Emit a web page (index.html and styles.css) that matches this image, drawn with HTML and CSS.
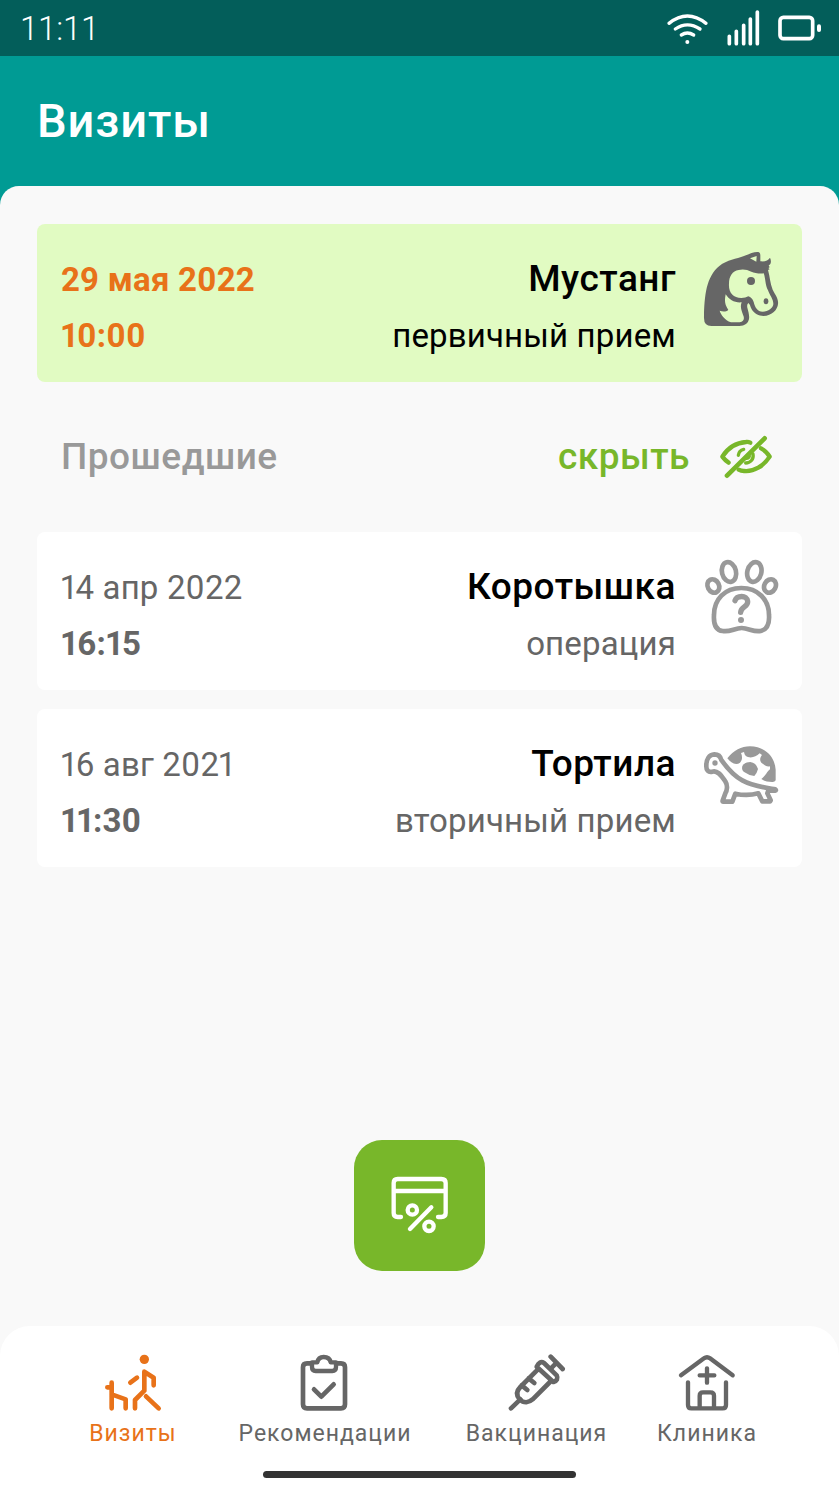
FILE: index.html
```html
<!DOCTYPE html>
<html lang="ru">
<head>
    <meta charset="UTF-8">
    <meta name="viewport" content="width=device-width, initial-scale=1.0">
    <title>Визиты</title>
    <link rel="stylesheet" href="styles.css">
</head>
<body>

    <div class="status-bar">
        <span class="clock">11:11</span>
        <svg class="status-icons" viewBox="0 0 597 168">
            <g fill="none" stroke="#fff" stroke-linecap="round" stroke-width="10">
                <path d="M87 70Q142 26 198 70M106 87Q142 62 180 87M124 105Q142 93 161 105"/>
                <path d="M268 109V131M289 94V131M311 76V131M331 57V131M352 36V131" stroke-width="11"/>
                <rect x="420" y="52" width="98" height="64" rx="10" stroke-width="11"/>
                <path d="M537 79V90" stroke-width="12"/>
            </g>
            <circle cx="142" cy="126" r="6" fill="#fff"/>
        </svg>
    </div>

    <header>
        <h1>Визиты</h1>
    </header>

    <main>
        <section class="visit upcoming">
            <div class="when">
                <div class="date">29 мая 2022</div>
                <div class="time">10:00</div>
            </div>
            <div class="pet">
                <div class="name">Мустанг</div>
                <div class="reason">первичный прием</div>
            </div>
            <svg class="pet-icon" viewBox="36 45 234 234">
                <path fill="#666" d="M64 273Q42 273 42 249C43 180 49 125 88 93C112 74 139 72 162 63C181 55 194 50 204 51Q211 52 211 61V79C225 81 235 76 240 68C245 79 243 88 236 91L239 97L235 99L239 103L234 105C240 125 240 145 248 164C256 180 266 191 264 207C263 223 246 243 220 243C207 243 192 236 185 223C180 214 181 208 175 204Q170 209 172 218C176 233 181 249 174 260C166 275 145 273 120 273Z"/>
                <path fill="#e1fbc2" d="M180 70L200 63L199 80ZM146 105C127 108 117 124 117 146C115 172 129 189 154 189Q167 189 175 184Q186 187 191 201C195 217 202 230 218 230C235 230 251 217 250 206C250 192 239 181 234 166C225 150 227 129 221 115C207 117 193 113 184 110Q166 101 146 105ZM107 178C103 198 104 207 115 225C107 231 98 230 89 227C93 240 104 255 123 262H149C163 260 164 249 159 239C152 221 151 213 155 202C134 204 118 195 107 178Z"/>
                <circle cx="183" cy="138" r="12" fill="#666"/>
                <ellipse cx="228" cy="199" rx="7" ry="9" fill="#666"/>
            </svg>
        </section>

        <div class="past-header">
            <h2>Прошедшие</h2>
            <a class="hide-link">скрыть</a>
            <svg class="eye-icon" viewBox="54 24 168 138">
                <g fill="none" stroke="#78b72a" stroke-width="13" stroke-linecap="round" stroke-linejoin="round">
                    <path d="M86 113Q76 107 67 95C84 68 108 53 138 51Q145 50 151 53"/>
                    <path d="M183 70Q199 78 209 95C191 123 162 141 132 138Q123 138 116 134"/>
                    <path d="M115 91Q117 76 131 73M137 114C151 114 162 103 159 87M138 100Q145 101 148 94" stroke-width="10"/>
                    <path d="M81 152L194 40" stroke-width="14"/>
                </g>
            </svg>
        </div>

        <section class="visit">
            <div class="when">
                <div class="date">14 апр 2022</div>
                <div class="time">16:15</div>
            </div>
            <div class="pet">
                <div class="name">Коротышка</div>
                <div class="reason">операция</div>
            </div>
            <svg class="pet-icon" viewBox="36 39 234 234">
                <g fill="none" stroke="#999" stroke-width="14" stroke-linecap="round" stroke-linejoin="round">
                    <ellipse cx="117" cy="81" rx="21" ry="30" transform="rotate(-14 117 81)"/>
                    <ellipse cx="193" cy="81" rx="21" ry="30" transform="rotate(14 193 81)"/>
                    <ellipse cx="70" cy="123" rx="17" ry="21" transform="rotate(-28 70 123)"/>
                    <ellipse cx="240" cy="123" rx="17" ry="21" transform="rotate(28 240 123)"/>
                    <path d="M154 129C104 129 72 163 72 210C70 241 81 256 98 258C120 262 134 249 155 249S190 262 212 258C230 254 239 239 237 210C237 164 204 129 154 129Z"/>
                    <path d="M135 167C140 151 171 149 173 169C175 187 153 183 152 202" stroke-width="16"/>
                </g>
                <circle cx="153" cy="225" r="9" fill="#999"/>
            </svg>
        </section>

        <section class="visit">
            <div class="when">
                <div class="date">16 авг 2021</div>
                <div class="time">11:30</div>
            </div>
            <div class="pet">
                <div class="name">Тортила</div>
                <div class="reason">вторичный прием</div>
            </div>
            <svg class="pet-icon" viewBox="36 15 234 234">
                <path fill="#999" d="M112 85C131 61 154 49 180 49C225 50 254 79 257 119V151Q254 157 246 156C235 155 224 154 214 147C226 139 232 123 240 118V109C232 112 221 104 215 99C208 91 210 83 216 75L209 70C199 80 185 85 174 81C163 77 164 72 162 66L153 69C158 80 157 91 150 98C139 106 125 101 112 85Z"/>
                <path fill="#999" d="M157 108Q164 96 181 96Q198 98 204 117Q200 132 193 138Q175 135 161 125Q154 119 157 108Z"/>
                <path fill="none" stroke="#999" stroke-width="14" stroke-linecap="round" stroke-linejoin="round" d="M94 90C91 77 83 73 73 73C57 74 49 88 49 106C48 120 55 128 67 125C84 120 95 139 106 154C114 166 111 182 106 190L98 212Q97 215 100 215H127L136 191Q171 199 205 190L217 214H240L242 211L232 190L235 182H255Q260 181 256 178C226 173 190 169 157 151C126 135 107 108 94 90Z"/>
                <circle cx="75" cy="99" r="8" fill="#999"/>
            </svg>
        </section>
    </main>

    <button class="discount">
        <svg class="discount-icon" viewBox="150 138 180 180">
            <g fill="none" stroke="#fff" stroke-width="13" stroke-linecap="round" stroke-linejoin="round">
                <path d="M183 261H173Q161 261 161 249V159Q161 147 173 147H304Q317 147 317 159V249Q317 261 304 261H294M161 183H317"/>
                <path d="M210 297L274 232"/>
                <circle cx="217" cy="240" r="14"/>
                <circle cx="267" cy="289" r="14"/>
            </g>
        </svg>
    </button>

    <nav>
        <div class="tab tab-visits active">
            <svg class="tab-icon" viewBox="69 38 180 180">
                <g fill="none" stroke="currentColor" stroke-width="14" stroke-linecap="round" stroke-linejoin="round">
                    <path d="M82 141H95M95 127V204M95 162L137 177V204"/>
                    <path d="M165 204V179L193 151V94L221 112V135M171 112L151 127M198 168L236 204"/>
                </g>
                <circle cx="193" cy="57" r="14" fill="currentColor"/>
            </svg>
            <span>Визиты</span>
        </div>
        <div class="tab tab-recommendations">
            <svg class="tab-icon" viewBox="45 38 180 180">
                <g fill="none" stroke="currentColor" stroke-width="14" stroke-linecap="round" stroke-linejoin="round">
                    <path d="M96 69H81Q69 69 69 81V192Q69 204 81 204H183Q195 204 195 192V81Q195 69 183 69H168"/>
                    <path d="M96 66H112Q115 50 131 50Q149 50 152 66H168V80Q168 92 157 92H107Q96 92 96 80Z" stroke-width="13"/>
                    <path d="M102 147L124 169L161 132"/>
                </g>
            </svg>
            <span>Рекомендации</span>
        </div>
        <div class="tab tab-vaccination">
            <svg class="tab-icon" viewBox="79 38 180 180">
                <g fill="none" stroke="currentColor" stroke-width="14" stroke-linecap="round" stroke-linejoin="round">
                    <path d="M91 204L119 177M210 49L246 86M228 67L211 84"/>
                    <path d="M168 79Q177 60 190 68L228 105Q235 119 218 125ZM174 85L119 140C106 153 107 166 117 177C130 190 145 187 156 177L211 122M123 135L140 149M144 114L161 128"/>
                </g>
            </svg>
            <span>Вакцинация</span>
        </div>
        <div class="tab tab-clinic">
            <svg class="tab-icon" viewBox="109 38 180 180">
                <g fill="none" stroke="currentColor" stroke-width="13" stroke-linecap="round" stroke-linejoin="round">
                    <path d="M121 105L190 54Q199 47 208 54L276 105"/>
                    <path d="M142 126V194Q142 204 152 204H246Q256 204 256 194V126M177 204V166Q177 156 187 156H209Q220 156 220 166V204M199 84V127M177 105H221"/>
                </g>
            </svg>
            <span>Клиника</span>
        </div>
        <div class="home-line"></div>
    </nav>

</body>
</html>
```

FILE: styles.css
```css
body {
    font-family: Roboto, "Liberation Sans", sans-serif;
    background: linear-gradient(#009b94 400px, #f9f9f9 400px);
    margin: 0;
    padding: 0;
    width: 839px;
    height: 1492px;
    display: flex;
    flex-direction: column;
    overflow: hidden;
}

.status-bar {
    height: 56px;
    flex: none;
    background-color: #035e5a;
    color: #fff;
    display: flex;
    justify-content: space-between;
}

.clock {
    font-size: 33px;
    font-weight: 300;
    line-height: 57px;
    letter-spacing: -0.2px;
    padding-left: 20px;
}

.status-icons {
    width: 199px;
    height: 56px;
}

header {
    height: 130px;
    flex: none;
    color: #fff;
}

h1 {
    font-size: 47px;
    font-weight: 500;
    line-height: 55px;
    letter-spacing: 0.9px;
    margin: 37px 0 0 37px;
}

main {
    height: 954px;
    flex: none;
    box-sizing: border-box;
    padding: 38px 37px 0;
    background-color: #f9f9f9;
    border-radius: 19px 19px 0 0;
}

.visit {
    display: flex;
    height: 158px;
    box-sizing: border-box;
    padding: 26px 22px 0 24px;
    margin-bottom: 19px;
    background-color: #fff;
    border-radius: 8px;
    color: #666;
    font-size: 33px;
    line-height: 56px;
    letter-spacing: 0.16px;
}

.when {
    flex: 1;
    padding-top: 2px;
    font-feature-settings: "pnum";
}

.pet {
    text-align: right;
    margin-right: 26px;
    padding-top: 1px;
}

.time {
    font-weight: 700;
}

.name {
    color: #000;
    font-size: 37px;
    font-weight: 500;
    line-height: 56px;
    letter-spacing: 0.5px;
}

.reason {
    padding-top: 1px;
}

.pet-icon {
    width: 78px;
    height: 78px;
}

.upcoming {
    background-color: #e1fbc2;
}

.upcoming .when {
    color: #e87219;
    font-weight: 700;
}

.upcoming .reason {
    color: #000;
}

.past-header {
    display: flex;
    align-items: center;
    height: 148px;
    margin-top: -19px;
    margin-bottom: 2px;
    padding: 0 28px 0 24px;
    font-size: 37px;
    font-weight: 500;
    letter-spacing: 0.5px;
}

h2 {
    flex: 1;
    margin: 0;
    color: #999;
    font-size: 37px;
    font-weight: 500;
}

.hide-link {
    color: #78b72a;
    margin-right: 28px;
}

.eye-icon {
    width: 56px;
    height: 46px;
}

.discount {
    align-self: center;
    flex: none;
    width: 131px;
    height: 131px;
    margin-bottom: 55px;
    padding: 0;
    background-color: #78b72a;
    border: none;
    border-radius: 28px;
    display: flex;
    align-items: center;
    justify-content: center;
}

.discount-icon {
    width: 60px;
    height: 60px;
}

nav {
    flex: 1;
    display: flex;
    flex-wrap: wrap;
    align-content: flex-start;
    box-sizing: border-box;
    padding: 27px 50px 0 62px;
    background-color: #fff;
    border-radius: 30px 30px 0 0;
}

.tab {
    display: flex;
    flex-direction: column;
    align-items: center;
    height: 118px;
    color: #666;
    font-size: 23px;
    line-height: 30px;
    letter-spacing: 1px;
}

.tab.active {
    color: #e87219;
}

.tab-visits {
    width: 142px;
}

.tab-recommendations {
    width: 242px;
}

.tab-vaccination {
    width: 181px;
}

.tab-clinic {
    width: 160px;
}

.tab-icon {
    width: 60px;
    height: 60px;
    margin-bottom: 6px;
}

.home-line {
    width: 313px;
    height: 7px;
    margin-left: 201px;
    background-color: #333;
    border-radius: 4px;
}
```
